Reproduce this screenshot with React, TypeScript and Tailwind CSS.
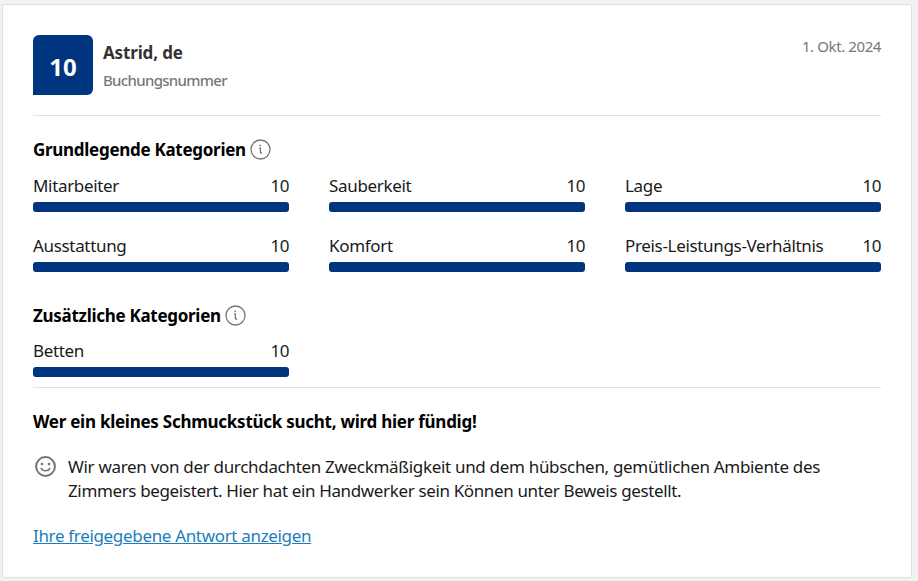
import React from "react";

function Info() {
  return (
    <svg className="mt-px shrink-0" width="21" height="21" viewBox="0 0 21 21" fill="none" stroke="#777" strokeWidth="1.3">
      <circle cx="10.5" cy="10.5" r="9.5" />
      <path d="M9 9.1h1.4v3.8q0 1.4 1.8 1.2" />
      <circle cx="10.2" cy="6.4" r="0.85" fill="#777" stroke="none" />
    </svg>
  );
}

function Smile() {
  return (
    <svg className="mt-[1px] ml-[2px] shrink-0" width="21" height="21" viewBox="0 0 21 21" fill="none" stroke="#737373" strokeWidth="2">
      <circle cx="10.5" cy="10.5" r="9.4" />
      <path d="M6.2 12.4c1.5 3 7.1 3 8.6 0" strokeWidth="1.5" strokeLinecap="round" />
      <circle cx="7" cy="8" r="1.35" fill="#737373" stroke="none" />
      <circle cx="14" cy="8" r="1.35" fill="#737373" stroke="none" />
    </svg>
  );
}

function Score({ label }: { label: string }) {
  return (
    <div className="h-[60px] w-64">
      <div className="flex h-7 justify-between leading-6">
        <span className="whitespace-nowrap">{label}</span>
        <span className="tracking-[-0.5px]">10</span>
      </div>
      <div className="h-[10px] rounded-[3px] bg-[#003580]" />
    </div>
  );
}

export default function App() {
  return (
    <div className="h-[581px] w-[918px] bg-[#f2f2f2] pt-1 pl-[2px] font-['Noto_Sans',sans-serif] text-[17px] tracking-[-0.33px] text-[#1a1a1a]">
      <main className="h-[574px] w-[910px] rounded-xs border border-[#e0e0e0] bg-white px-[30px] pt-[30px]">
        <header className="flex h-[81px] border-b border-[#e0e0e0]">
          <div className="flex size-[60px] items-center justify-center rounded-md rounded-bl-none bg-[#003580] pt-[3px] text-2xl font-bold tracking-normal text-white">10</div>
          <div className="ml-[10px] flex-1">
            <div className="mt-[6px] h-[27px] leading-6 font-bold tracking-[-0.15px] text-[#333]">Astrid, de</div>
            <div className="text-[15px] leading-6 font-medium tracking-[-0.69px] text-[#777]">Buchungsnummer</div>
          </div>
          <time className="-mt-px text-[15px] leading-6 tracking-[-0.4px] text-[#777]">1. Okt. 2024</time>
        </header>
        <h2 className="mt-[22px] flex h-9 gap-1 leading-6 font-bold tracking-[-0.29px] text-black">Grundlegende Kategorien<Info /></h2>
        <section className="grid grid-cols-3 gap-x-10">
          <Score label="Mitarbeiter" />
          <Score label="Sauberkeit" />
          <Score label="Lage" />
          <Score label="Ausstattung" />
          <Score label="Komfort" />
          <Score label="Preis-Leistungs-Verhältnis" />
        </section>
        <h2 className="mt-[10px] flex h-[35px] gap-1 leading-6 font-bold tracking-[-0.29px] text-black">Zusätzliche Kategorien<Info /></h2>
        <section className="h-[49px] border-b border-[#e0e0e0]"><Score label="Betten" /></section>
        <h2 className="mt-[22px] leading-6 font-bold tracking-[-0.26px] text-black">Wer ein kleines Schmuckstück sucht, wird hier fündig!</h2>
        <div className="mt-[21px] flex gap-3">
          <Smile />
          <p className="leading-6 tracking-[-0.31px]">
            Wir waren von der durchdachten Zweckmäßigkeit und dem hübschen, gemütlichen Ambiente des<br />
            <span className="tracking-[-0.36px]">Zimmers begeistert. Hier hat ein Handwerker sein Können unter Beweis gestellt.</span>
          </p>
        </div>
        <a className="mt-[21px] block leading-6 text-[#1b7ebc] underline">Ihre freigegebene Antwort anzeigen</a>
      </main>
    </div>
  );
}
